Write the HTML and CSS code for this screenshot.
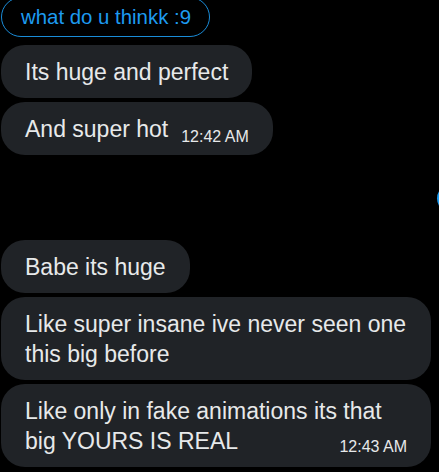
FILE: index.html
```html
<!DOCTYPE html>
<html>

<head>
    <meta charset="utf-8">
    <title>messages</title>
    <link rel="stylesheet" href="styles.css">
</head>

<body>
    <div class="chat">
        <div class="reply-pill">what do u thinkk :9</div>

        <div class="group">
            <div class="bubble">Its huge and perfect</div>
            <div class="bubble">And super hot<span class="time">12:42 AM</span></div>
        </div>

        <div class="sent-row">
            <div class="sent-bubble"></div>
        </div>

        <div class="group">
            <div class="bubble">Babe its huge</div>
            <div class="bubble">Like super insane ive never seen one this big before</div>
            <div class="bubble stamped">
                <div>Like only in fake animations its that</div>
                <div class="last-line">
                    <span>big YOURS IS REAL</span>
                    <span class="time-end">12:43 AM</span>
                </div>
            </div>
        </div>
    </div>
</body>

</html>
```

FILE: styles.css
```css
html, body {
    margin: 0;
    background: #000000;
    overflow: hidden;
}

.chat {
    width: 439px;
    height: 472px;
    padding-left: 1px;
    font-family: "Liberation Sans", Arial, sans-serif;
    color: #e7e9ea;
    display: flex;
    flex-direction: column;
    align-items: flex-start;
}

/* quoted reply, cropped at the top of the shot */
.reply-pill {
    margin-top: -3px;
    height: 38px;
    line-height: 38px;
    padding: 0 18px 0 19px;
    border: 1px solid #1a8cd8;
    border-radius: 20px;
    color: #1d9bf0;
    font-size: 20.4px;
}

.group {
    display: flex;
    flex-direction: column;
    align-items: flex-start;
    gap: 4px;
    margin-top: 8px;
}

.bubble {
    max-width: 382px;
    padding: 11.5px 24px;
    background: #202327;
    border-radius: 24px;
    font-size: 23px;
    line-height: 30px;
}

.time {
    margin-left: 13px;
    font-size: 16px;
    line-height: 0;
    vertical-align: -5px;
}

.bubble.stamped {
    width: 382px;
}

.last-line {
    display: flex;
    justify-content: space-between;
    align-items: flex-end;
}

.time-end {
    font-size: 16px;
    line-height: 17px;
    padding-bottom: 1px;
}

/* sent message running off the right edge */
.sent-row {
    width: 438px;
    margin-top: 30px;
    height: 27px;
}

.sent-bubble {
    margin-left: 436px;
    width: 40px;
    height: 27px;
    background: #1d9bf0;
    border-radius: 14px;
}

.sent-row + .group {
    margin-top: 28px;
}
```
